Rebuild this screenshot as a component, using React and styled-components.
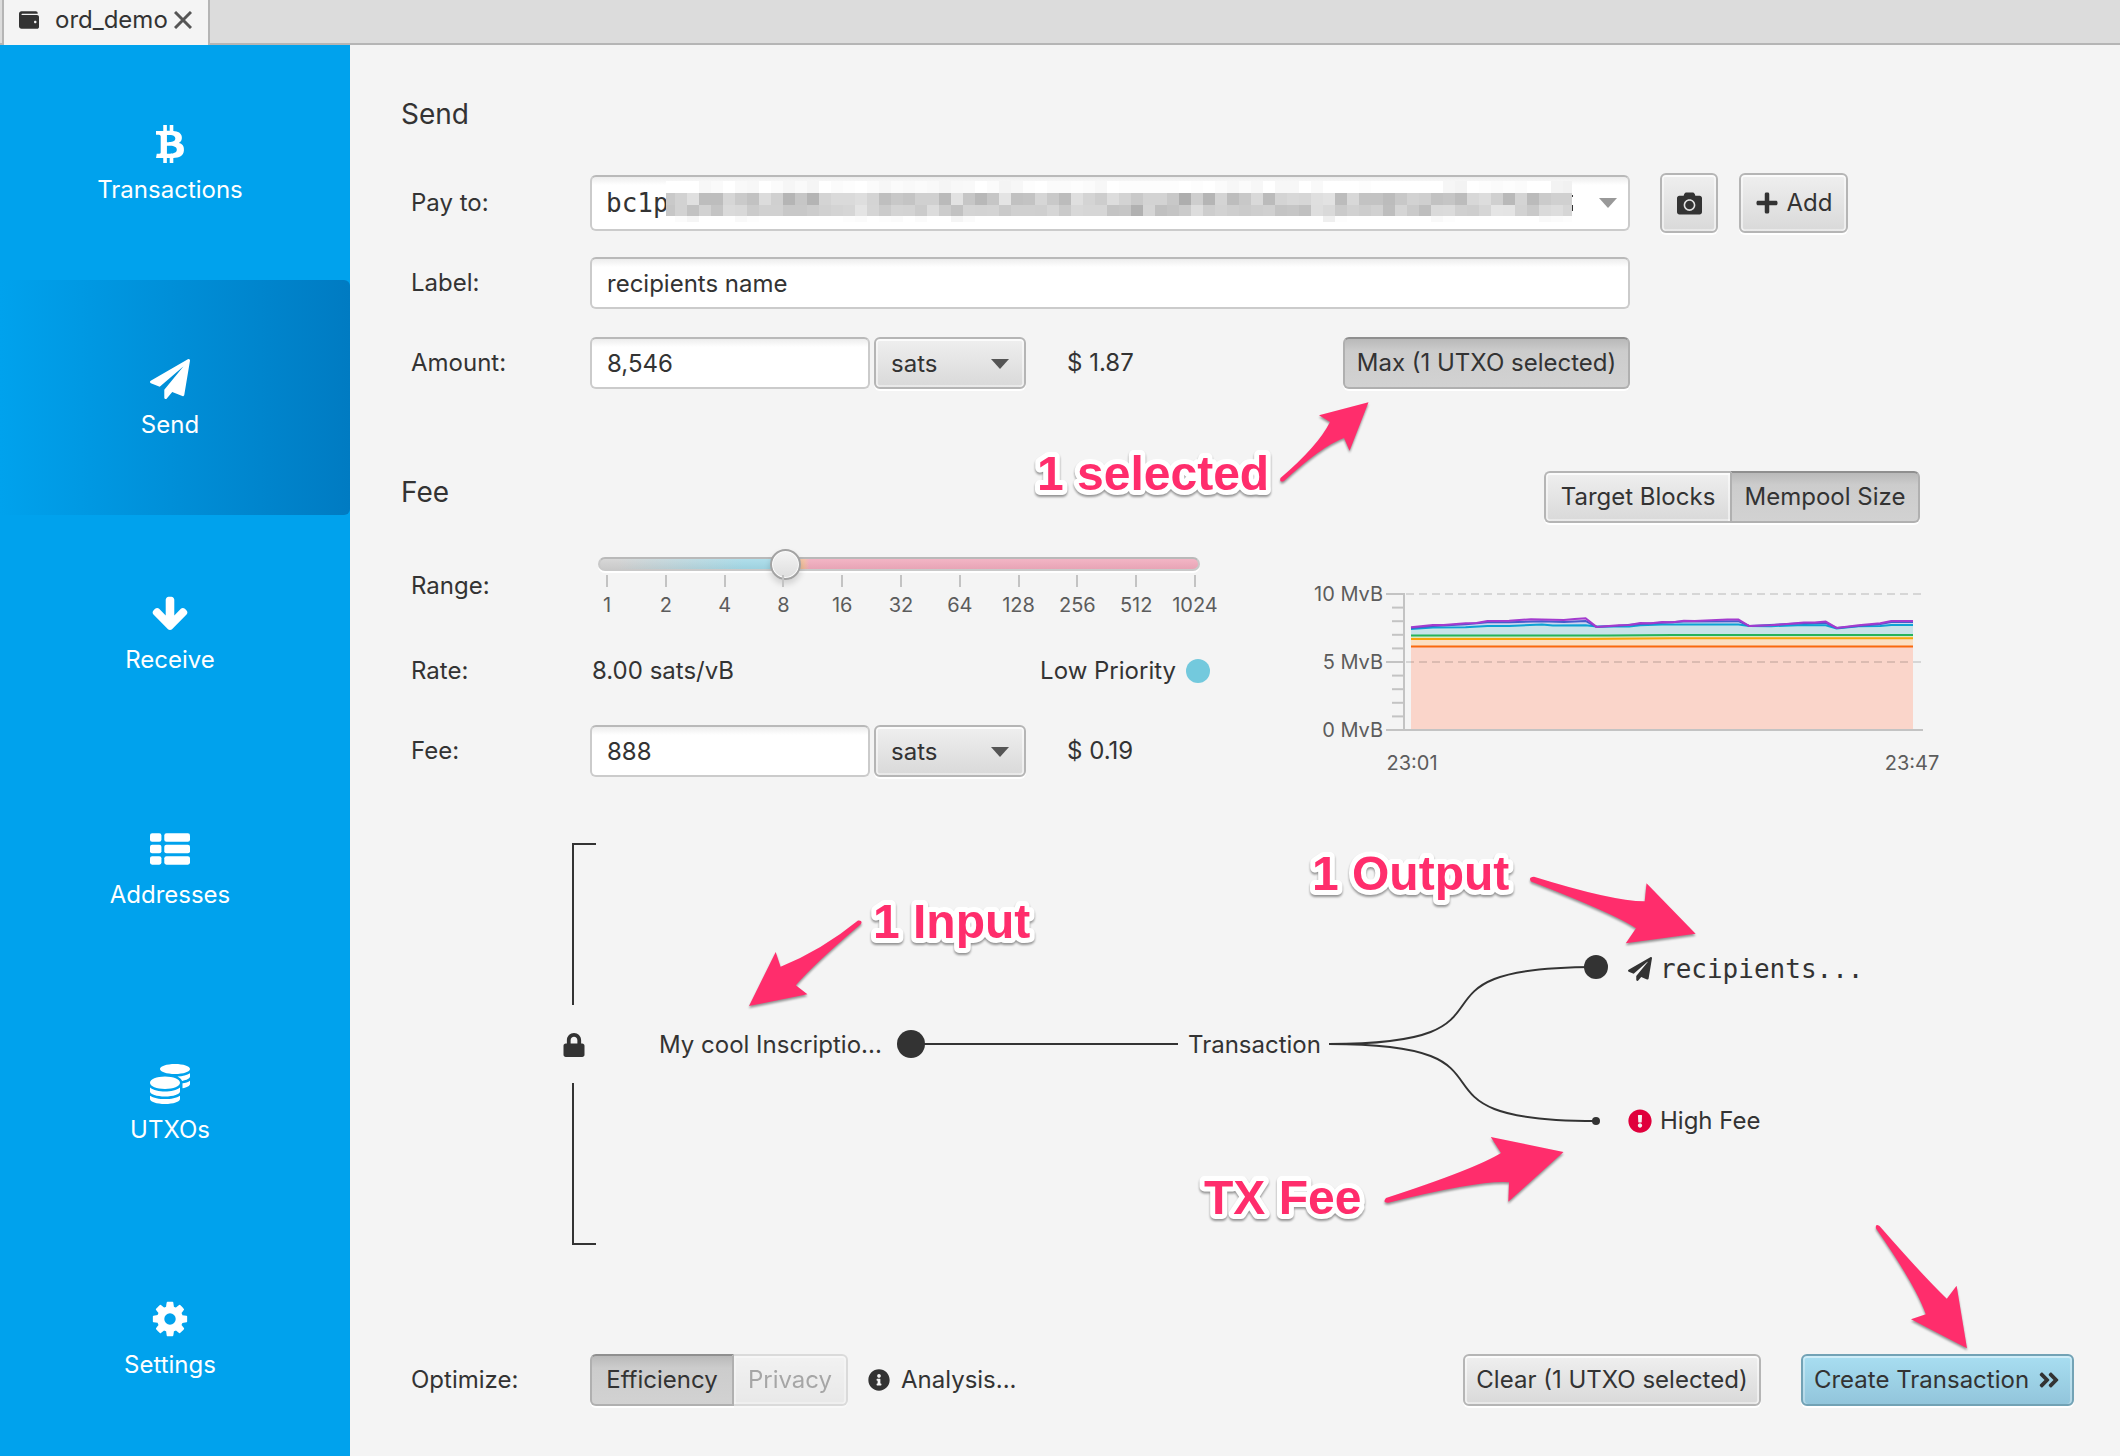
import React, { useState } from "react";
import styled, { createGlobalStyle, css } from "styled-components";
import {
  FaBtc,
  FaCoins,
  FaCamera,
  FaPlus,
  FaLock,
  FaPaperPlane,
  FaExclamationCircle,
  FaInfoCircle,
  FaWallet,
  FaAngleDoubleRight,
} from "react-icons/fa";

const Global = createGlobalStyle`
  *, *::before, *::after { box-sizing: border-box; }
  body { margin: 0; background: #f4f4f4; }
  body, button, input, select { font-family: Inter, "Liberation Sans", sans-serif; color: #333; }
`;

const INK = "#333333";
const PINK = "#ff2d6c";

/* ---------- shell ---------- */

const Window = styled.div`
  display: flex;
  flex-direction: column;
  min-height: 100vh;
  font-size: 24px;
  line-height: 32px;
  color: ${INK};
`;

const TabBar = styled.div`
  display: flex;
  height: 45px;
  padding-left: 2px;
  background: #dcdcdc;
  border-bottom: 2px solid #b5b5b5;
`;

const Tab = styled.div`
  display: flex;
  align-items: center;
  height: 45px;
  padding: 0 16px 6px 15px;
  background: #f4f4f4;
  border-left: 2px solid #b5b5b5;
  border-right: 2px solid #b5b5b5;
`;

const TabTitle = styled.span`
  margin: 0 6px 0 16px;
`;

const CloseButton = styled.button`
  display: flex;
  padding: 0;
  border: 0;
  background: none;
  color: #555;
`;

const Body = styled.div`
  display: flex;
  flex: 1;
`;

const Sidebar = styled.nav`
  display: flex;
  flex-direction: column;
  flex: 0 0 350px;
  background: #00a2ed;
`;

const NavItem = styled.button`
  display: flex;
  flex: 1;
  flex-direction: column;
  align-items: center;
  justify-content: center;
  gap: 10px;
  padding: 4px 10px 0 0;
  border: 0;
  border-radius: 0 6px 6px 0;
  font-size: 24px;
  line-height: 32px;
  color: #fff;
  background: ${(p) => (p.$active ? "linear-gradient(to right, #00a2ed, #007bc2)" : "transparent")};
`;

const NavIcon = styled.span`
  display: flex;
  align-items: center;
  height: 40px;
`;

const Main = styled.main`
  display: flex;
  flex: 1;
  flex-direction: column;
  min-width: 0;
  padding: 47px 46px 50px 51px;
`;

/* ---------- form parts ---------- */

const Heading = styled.h2`
  margin: 0 0 27px;
  font-size: 28px;
  font-weight: 400;
  line-height: 44px;
`;

const Row = styled.div`
  display: grid;
  grid-template-columns: 179px minmax(0, 1fr);
  align-items: center;
  min-height: ${(p) => (p.$tall ? 90 : 80)}px;
  padding-left: 10px;
`;

const SendSection = styled.section`
  max-width: 1447px;
`;

const SendRow = styled(Row)`
  grid-template-columns: 179px minmax(0, 1fr) 218px;
`;

const RowButtons = styled.div`
  display: flex;
  gap: 21px;
  padding-left: 30px;
`;

const Inline = styled.div`
  display: flex;
  align-items: center;
`;

const fieldBox = css`
  height: 52px;
  border: 2px solid #cbcbcb;
  border-top-color: #b9b9b9;
  border-radius: 6px;
  background: linear-gradient(#ededed, #ffffff 8px);
  font-size: 24px;
  color: ${INK};
  outline: none;
`;

const TextInput = styled.input`
  ${fieldBox}
  width: ${(p) => (p.$short ? "280px" : "100%")};
  padding: 0 15px;
`;

const Combo = styled.div`
  position: relative;
`;

const AddressInput = styled.input`
  ${fieldBox}
  display: block;
  width: 100%;
  height: 56px;
  padding: 0 14px;
  font-family: "DejaVu Sans Mono", monospace;
  font-size: 26px;
`;

const Redaction = styled.svg`
  position: absolute;
  left: 76px;
  top: 6px;
`;

const ComboArrow = styled.svg`
  position: absolute;
  right: 13px;
  top: 23px;
`;

const raised = css`
  border: 2px solid #b5b5b5;
  background: linear-gradient(#efefef, #d9d9d9);
  box-shadow: inset 0 2px 0 #fbfbfb, inset 2px 0 0 rgba(255, 255, 255, 0.5),
    inset -2px 0 0 rgba(255, 255, 255, 0.5), inset 0 -2px 0 rgba(255, 255, 255, 0.4), 0 2px 0 #fff;
`;

const pressed = css`
  border: 2px solid #b0b0b0;
  border-top-color: #8f8f8f;
  background: linear-gradient(#b9b9b9, #cccccc 12px, #d2d2d2);
  box-shadow: 0 2px 0 #fff;
`;

const primary = css`
  border: 2px solid #72a2b5;
  background: linear-gradient(#a8def1, #92c5db);
  box-shadow: inset 0 2px 0 #cfedf8, inset 2px 0 0 rgba(255, 255, 255, 0.3),
    inset -2px 0 0 rgba(255, 255, 255, 0.3), 0 2px 0 #fff;
`;

const Button = styled.button`
  display: flex;
  align-items: center;
  justify-content: center;
  gap: 8px;
  width: ${(p) => p.$width}px;
  height: ${(p) => (p.$tall ? 60 : 52)}px;
  padding: 0;
  border-radius: 6px;
  font-size: 24px;
  line-height: 32px;
  color: ${INK};
  white-space: nowrap;
  ${(p) => (p.$pressed ? pressed : p.$primary ? primary : raised)}
`;

const Segments = styled.div`
  display: flex;
`;

const Segment = styled(Button)`
  border-radius: ${(p) => (p.$first ? "6px 0 0 6px" : "0 6px 6px 0")};
  ${(p) => (p.$first ? (p.$pressed ? "" : "border-right: 0;") : p.$pressed ? "" : "border-left: 0;")}
  opacity: ${(p) => (p.disabled ? 0.4 : 1)};
`;

const SelectWrap = styled.div`
  position: relative;
  width: 152px;
  margin: 0 41px 0 4px;
`;

const Select = styled.select`
  ${raised}
  appearance: none;
  width: 100%;
  height: 52px;
  padding: 0 15px;
  border-radius: 6px;
  font-size: 24px;
  outline: none;
`;

const SelectArrow = styled.svg`
  position: absolute;
  right: 17px;
  top: 22px;
  pointer-events: none;
`;

const Anchor = styled.div`
  position: relative;
  margin-left: ${(p) => (p.$push ? "auto" : "0")};
`;

/* ---------- fee section ---------- */

const FeeSection = styled.section`
  display: flex;
  gap: 85px;
  margin-top: 67px;
`;

const FeeForm = styled.div`
  flex: 0 0 814px;
`;

const FeeChart = styled.div`
  display: flex;
  flex: 0 0 650px;
  flex-direction: column;
  align-items: flex-end;
  gap: 48px;
  padding-top: 1px;
`;

const ChartModes = styled(Segments)`
  margin-right: 30px;
`;

const SliderBox = styled.div`
  padding: 0 15px 7px 8px;
`;

const Slider = styled.input`
  appearance: none;
  display: block;
  width: 100%;
  height: 30px;
  margin: 0;
  background: none;

  &::-webkit-slider-runnable-track {
    height: 14px;
    border: 2px solid #c9c9c9;
    border-top-color: #b9b9b9;
    border-radius: 7px;
    background: linear-gradient(rgba(255, 255, 255, 0.12), rgba(0, 0, 0, 0.04)),
      linear-gradient(to right, #d2d2d2, #d2d2d2 3%, #a5dae8 24%, #a5dae8 30%, #f5bf9d 32%, #f5bf9d 34%, #f1abbd 35%);
    box-shadow: 0 2px 0 #fff;
  }

  &::-webkit-slider-thumb {
    appearance: none;
    width: 31px;
    height: 31px;
    margin-top: -10px;
    border: 2px solid #a3a3a3;
    border-radius: 50%;
    background: linear-gradient(#f4f4f4, #dedede);
    box-shadow: inset 0 0 0 1px #fbfbfb, 0 4px 6px rgba(0, 0, 0, 0.15);
  }
`;

const Ticks = styled.div`
  display: flex;
  justify-content: space-between;
  margin: -4px 4px 0 8px;
`;

const Tick = styled.div`
  display: flex;
  flex-direction: column;
  align-items: center;
  gap: 6px;
  width: 2px;
  font-size: 20px;
  line-height: 24px;
  color: #5c5c5c;

  &::before {
    content: "";
    width: 2px;
    height: 12px;
    background: #c3c3c3;
  }
`;

const Rate = styled.div`
  display: flex;
  align-items: center;
  padding: 0 5px 0 2px;
`;

const Priority = styled.span`
  display: flex;
  align-items: center;
  gap: 10px;
  margin-left: auto;

  &::after {
    content: "";
    width: 24px;
    height: 24px;
    border-radius: 50%;
    background: #73c9dd;
  }
`;

/* ---------- diagram ---------- */

const Diagram = styled.section`
  position: relative;
  width: 1300px;
  height: 402px;
  margin: 52px 0 0 162px;
`;

const DiagramLines = styled.svg`
  position: absolute;
  inset: 0;
`;

const Node = styled.div`
  position: absolute;
  left: ${(p) => p.$x}px;
  top: ${(p) => p.$y}px;
  display: flex;
  align-items: center;
  gap: 8px;
  height: 32px;
  white-space: nowrap;
  font-family: ${(p) => (p.$mono ? '"DejaVu Sans Mono", monospace' : "inherit")};
  font-size: ${(p) => (p.$mono ? 26 : 24)}px;
`;

/* ---------- footer ---------- */

const Footer = styled.footer`
  display: flex;
  align-items: center;
  margin-top: auto;
  padding-left: 10px;
`;

const FooterLabel = styled.span`
  width: 179px;
`;

const AnalysisButton = styled.button`
  display: flex;
  align-items: center;
  gap: 11px;
  margin: 0 auto 0 20px;
  padding: 0;
  border: 0;
  background: none;
  font-size: 24px;
  line-height: 32px;
  color: ${INK};
`;

const FooterActions = styled.div`
  display: flex;
  gap: 40px;
`;

/* ---------- call-outs ---------- */

const CalloutLayer = styled.svg`
  position: absolute;
  left: ${(p) => p.$left}px;
  top: ${(p) => p.$top}px;
  overflow: visible;
  pointer-events: none;

  path {
    fill: ${PINK};
    filter: drop-shadow(0 2px 1px rgba(0, 0, 0, 0.4));
  }

  text {
    font-family: "Liberation Sans", Arial, sans-serif;
    font-size: 48px;
    font-weight: 700;
    fill: ${PINK};
    stroke: #fff;
    stroke-width: 10px;
    stroke-linejoin: round;
    paint-order: stroke;
    filter: drop-shadow(0 2px 1px rgba(0, 0, 0, 0.4));
  }
`;

/* ---------- icons ---------- */

const Glyph = ({ d }) => (
  <svg width="40" height="40" viewBox="0 0 1792 1792" fill="currentColor" aria-hidden="true">
    <path d={d} />
  </svg>
);

const PLANE =
  "M1764 11q33 24 27 64l-256 1536q-5 29-32 45-14 8-31 8-11 0-24-5l-453-185-242 295q-18 23-49 23-13 0-22-4-19-7-30.500-23.500t-11.500-36.500v-349l864-1059-1069 925-395-162q-37-14-40-55-2-40 32-59l1664-960q15-9 32-9 20 0 36 11z";
const ARROW =
  "M1675 832q0 53-37 90l-651 652q-39 37-91 37-53 0-90-37l-651-652q-38-36-38-90 0-53 38-91l74-75q39-37 91-37 53 0 90 37l294 294v-704q0-52 38-90t90-38h128q52 0 90 38t38 90v704l294-294q37-37 90-37 52 0 91 37l75 75q37 39 37 91z";
const COG =
  "M1152 896q0-106-75-181t-181-75-181 75-75 181 75 181 181 75 181-75 75-181zm512-109v222q0 12-8 23t-20 13l-185 28q-19 54-39 91 35 50 107 138 10 12 10 25t-9 23q-27 37-99 108t-94 71q-12 0-26-9l-138-108q-44 23-91 38-16 136-29 186-7 28-36 28h-222q-14 0-24.500-8.500t-11.500-21.500l-28-184q-49-16-90-37l-141 107q-10 9-25 9-14 0-25-11-126-114-165-168-7-10-7-23 0-12 8-23 15-21 51-66.500t54-70.500q-27-50-41-99l-183-27q-13-2-21-12.500t-8-23.500v-222q0-12 8-23t19-13l186-28q14-46 39-92-40-57-107-138-10-12-10-24 0-10 9-23 26-36 98.500-107.500t94.500-71.500q13 0 26 10l138 107q44-23 91-38 16-136 29-186 7-28 36-28h222q14 0 24.500 8.500t11.500 21.500l28 184q49 16 90 37l142-107q9-9 24-9 13 0 25 10 129 119 165 170 7 8 7 22 0 12-8 23-15 21-51 66.500t-54 70.500q26 50 41 98l183 28q13 2 21 12.500t8 23.500z";

const ListGlyph = () => (
  <svg width="40" height="40" viewBox="0 0 1792 1792" fill="currentColor" aria-hidden="true">
    {[192, 704, 1216].map((y) => (
      <g key={y}>
        <rect x="0" y={y} width="512" height="384" rx="96" />
        <rect x="640" y={y} width="1152" height="384" rx="96" />
      </g>
    ))}
  </svg>
);

const NAV = [
  ["Transactions", <FaBtc size={38} />],
  ["Send", <Glyph d={PLANE} />],
  ["Receive", <Glyph d={ARROW} />],
  ["Addresses", <ListGlyph />],
  ["UTXOs", <FaCoins size={40} />],
  ["Settings", <Glyph d={COG} />],
];

/* ---------- redacted address ---------- */

const CELLS = [
  "fffffff7fafff9f7fffbf6faf5fffbfdfffbf7fbf9fbf9f5f8f9fffbf4f7fdfffbfbfdfbf7fffdfdfdfdfdfffdfffbf7fbf7fff7f7fff9fffffffdffffffffffff f6f3fffdfbfdfbfffff3f1fff9fbf9f9",
  "c9d2e0bdbdd6cac2dcd0b5c6b4d4dadaded4bfc8c4d0d0bae2c6b8c6e4c1c3d6c9bcdfd4cdddd3c9d3d3c8aeceb5d4bdc8d9bbd4d8d6dfe2bcd8c3c3bcc8d2cfc2c5bcd8ddd0b9d4bbcbd0d0",
  "c6d2c2d2c4dad8cbd1d1c8c8ccd1d4d6e4d5cbd4d3cbdcccc2d4d3d4cad0d0cfd6cad8d6d6c4c6b1d5c0c4cbddcdd2cecbced0c4c6c0ded9cad1cdd1bed5cabedadbd0ced6e5e4d2c9daddd6",
  "fffbf5fffffff9fdfffffffffffffffdfbfffdfbfffbfffff5fbffffffffffffffffffffffffffffffffffffffffffffffffffffffffffeffdffffffffffffff f9fdfffffffffffffff9fbfdff",
].map((row) => row.replace(/ /g, "").match(/../g));
const CELL_TOP = [0, 12, 24, 35];
const CELL_HEIGHT = [12, 12, 11, 6];

const RedactedAddress = () => (
  <Redaction width="908" height="42" shapeRendering="crispEdges" aria-hidden="true">
    {CELLS.map((row, r) =>
      row.slice(0, 76).map((c, i) => (
        <rect
          key={`${r}-${i}`}
          x={i === 0 ? 0 : i * 12 - 3}
          y={CELL_TOP[r]}
          width={i === 0 ? 9 : i === 75 ? 9 : 12}
          height={CELL_HEIGHT[r]}
          fill={`#${c}${c}${c}`}
        />
      ))
    )}
    <path d="M906 14h1v2h-1zM906 24h1v6h-1z" fill={INK} />
  </Redaction>
);

/* ---------- mempool chart ---------- */

const SERIES = {
  orange: [[0, 6.14], [46, 6.15]],
  yellow: [[0, 6.69], [16, 6.69], [24, 6.74], [46, 6.74]],
  green: [[0, 6.94], [18, 6.94], [24, 6.98], [46, 6.98]],
  blue: [[0, 7.43], [2, 7.53], [5, 7.56], [7, 7.65], [9, 7.65], [12, 7.75], [13, 7.68], [16, 7.7], [17, 7.6], [20, 7.6], [21, 7.7], [23, 7.75], [30, 7.75], [31, 7.65], [33, 7.63], [36, 7.73], [38, 7.7], [39, 7.46], [41, 7.63], [43, 7.65], [44, 7.73], [46, 7.73]],
  indigo: [[0, 7.5], [2, 7.65], [5, 7.78], [7, 7.92], [9, 7.92], [12, 8], [14, 7.95], [16, 8.02], [17, 7.58], [19, 7.66], [21, 7.8], [25, 7.97], [30, 8], [31, 7.65], [36, 7.85], [38, 7.88], [39, 7.5], [43, 7.8], [44, 7.95], [46, 7.95]],
  purple: [[0, 7.55], [2, 7.73], [3, 7.73], [5, 7.85], [6, 7.87], [7, 8.02], [9, 8.04], [11, 8.14], [14, 8.09], [15, 8.17], [16, 8.22], [17, 7.58], [19, 7.7], [20, 7.73], [21, 7.87], [22, 7.85], [23, 7.95], [24, 7.92], [25, 8.04], [26, 8.02], [29, 8.12], [30, 8.12], [31, 7.65], [33, 7.7], [36, 7.9], [37, 7.9], [38, 7.97], [39, 7.51], [41, 7.7], [43, 7.85], [44, 8.02], [46, 8.02]],
};

const px = (m) => 111 + (m * 502) / 46;
const py = (v) => 159 - v * 13.6;
const line = (s) => s.map(([m, v]) => `${px(m).toFixed(1)},${py(v).toFixed(1)}`).join(" ");
const BASE = [[0, 0], [46, 0]];
const band = (upper, lower) => `${line(upper)} ${line([...lower].reverse())}`;

const AREAS = [
  ["#fad5ca", SERIES.orange, BASE],
  ["#fbe0c3", SERIES.yellow, SERIES.orange],
  ["#dfe8bd", SERIES.green, SERIES.yellow],
  ["#c9e3e9", SERIES.blue, SERIES.green],
  ["#cdd6f0", SERIES.indigo, SERIES.blue],
  ["#e3cdf0", SERIES.purple, SERIES.indigo],
];
const LINES = [
  ["#f9690e", SERIES.orange],
  ["#f7a50c", SERIES.yellow],
  ["#27b45c", SERIES.green],
  ["#0da2d4", SERIES.blue],
  ["#4a5bcb", SERIES.indigo],
  ["#a43bce", SERIES.purple],
];

const AxisText = styled.text`
  font-size: 20px;
  fill: #5c5c5c;
`;

const MempoolChart = () => (
  <svg width="650" height="220" role="img" aria-label="Mempool size">
    {AREAS.map(([fill, upper, lower]) => (
      <polygon key={fill} points={band(upper, lower)} fill={fill} />
    ))}
    {[23, 91].map((y) => (
      <line key={y} x1="106" x2="623" y1={y} y2={y} stroke="#000" strokeOpacity="0.12" strokeWidth="2" strokeDasharray="8 5" />
    ))}
    {LINES.map(([stroke, s]) => (
      <polyline key={stroke} points={line(s)} fill="none" stroke={stroke} strokeWidth="2" />
    ))}
    <g stroke="#c3c3c3" strokeWidth="2">
      <path d="M104 22V159M86 159H623M86 23H104M86 91H104" />
      {[1, 2, 3, 4, 6, 7, 8, 9].map((v) => (
        <line key={v} x1="92" x2="103" y1={py(v)} y2={py(v)} />
      ))}
    </g>
    <AxisText x="83" y="30" textAnchor="end">10 MvB</AxisText>
    <AxisText x="83" y="98" textAnchor="end">5 MvB</AxisText>
    <AxisText x="83" y="166" textAnchor="end">0 MvB</AxisText>
    <AxisText x="112" y="199" textAnchor="middle">23:01</AxisText>
    <AxisText x="612" y="199" textAnchor="middle">23:47</AxisText>
  </svg>
);

const UnitSelect = ({ label }) => (
  <SelectWrap>
    <Select aria-label={label} defaultValue="sats">
      <option>sats</option>
      <option>BTC</option>
    </Select>
    <SelectArrow width="18" height="10" aria-hidden="true">
      <path d="M0 0H18L9 10Z" fill="#555" />
    </SelectArrow>
  </SelectWrap>
);

const RATES = [1, 2, 4, 8, 16, 32, 64, 128, 256, 512, 1024];

export default function App() {
  const [range, setRange] = useState(3);
  return (
    <Window>
      <Global />
      <TabBar>
        <Tab>
          <FaWallet size={20} />
          <TabTitle>ord_demo</TabTitle>
          <CloseButton aria-label="Close tab">
            <svg width="18" height="18" fill="none" stroke="currentColor" strokeWidth="3">
              <path d="M1 1L17 17M17 1L1 17" />
            </svg>
          </CloseButton>
        </Tab>
      </TabBar>
      <Body>
        <Sidebar>
          {NAV.map(([name, icon]) => (
            <NavItem key={name} $active={name === "Send"}>
              <NavIcon>{icon}</NavIcon>
              {name}
            </NavItem>
          ))}
        </Sidebar>
        <Main>
          <SendSection>
            <Heading>Send</Heading>
            <SendRow>
              <label htmlFor="payto">Pay to:</label>
              <Combo>
                <AddressInput id="payto" defaultValue="bc1p" />
                <RedactedAddress />
                <ComboArrow width="18" height="10" aria-hidden="true">
                  <path d="M0 0H18L9 10Z" fill="#999" />
                </ComboArrow>
              </Combo>
              <RowButtons>
                <Button $tall $width={58} aria-label="Scan QR code">
                  <FaCamera size={25} />
                </Button>
                <Button $tall $width={109}>
                  <FaPlus size={24} />
                  Add
                </Button>
              </RowButtons>
            </SendRow>
            <SendRow>
              <label htmlFor="label">Label:</label>
              <TextInput id="label" defaultValue="recipients name" />
            </SendRow>
            <SendRow>
              <label htmlFor="amount">Amount:</label>
              <Inline>
                <TextInput id="amount" $short defaultValue="8,546" />
                <UnitSelect label="Amount unit" />
                <span>$ 1.87</span>
                <Anchor $push>
                  <Button $pressed $width={287}>Max (1 UTXO selected)</Button>
                  <CalloutLayer $left={-315} $top={55} width="350" height="120" viewBox="1028 392 350 120">
                    <text x="1037" y="490">1 selected</text>
                    <path d="M1368.500 402.300L1319 415.300L1330 422Q1318 446 1280.500 478Q1279 483 1284 481Q1322 446 1344 438L1349.600 450.700Z" />
                  </CalloutLayer>
                </Anchor>
              </Inline>
            </SendRow>
          </SendSection>

          <FeeSection>
            <FeeForm>
              <Heading>Fee</Heading>
              <Row $tall>
                <label htmlFor="range">Range:</label>
                <SliderBox>
                  <Slider id="range" type="range" min="0" max="10" value={range} onChange={(e) => setRange(Number(e.target.value))} />
                  <Ticks>
                    {RATES.map((r) => (
                      <Tick key={r}>{r}</Tick>
                    ))}
                  </Ticks>
                </SliderBox>
              </Row>
              <Row>
                <span>Rate:</span>
                <Rate>
                  <span>8.00 sats/vB</span>
                  <Priority>Low Priority</Priority>
                </Rate>
              </Row>
              <Row>
                <label htmlFor="fee">Fee:</label>
                <Inline>
                  <TextInput id="fee" $short defaultValue="888" />
                  <UnitSelect label="Fee unit" />
                  <span>$ 0.19</span>
                </Inline>
              </Row>
            </FeeForm>
            <FeeChart>
              <ChartModes>
                <Segment $first $width={186}>Target Blocks</Segment>
                <Segment $pressed $width={190}>Mempool Size</Segment>
              </ChartModes>
              <MempoolChart />
            </FeeChart>
          </FeeSection>

          <Diagram>
            <DiagramLines width="1300" height="402" viewBox="563 843 1300 402" fill="none" stroke={INK} strokeWidth="2" aria-hidden="true">
              <path d="M596 844H573V1005M573 1083V1244H596" />
              <path d="M911 1044H1178" />
              <path d="M1329 1044C1542 1044 1383 967 1596 967" />
              <path d="M1329 1044C1542 1044 1383 1121 1596 1121" />
              <g fill={INK} stroke="none">
                <circle cx="911" cy="1044" r="14" />
                <circle cx="1596" cy="967" r="12" />
                <circle cx="1596" cy="1121" r="4" />
              </g>
            </DiagramLines>
            <Node $x={-1} $y={186}>
              <FaLock size={24} />
            </Node>
            <Node $x={96} $y={186}>My cool Inscriptio...</Node>
            <Node $x={625} $y={186}>Transaction</Node>
            <Node $x={1065} $y={110} $mono>
              <FaPaperPlane size={24} />
              recipients...
            </Node>
            <Node $x={1065} $y={262}>
              <FaExclamationCircle size={24} color="#e0003c" />
              High Fee
            </Node>
            <CalloutLayer $left={0} $top={0} width="1300" height="402" viewBox="563 843 1300 402">
              <text x="873" y="938">1 Input</text>
              <path d="M749 1006L775.700 952L780.600 966.700Q822 950 858 920.500Q863 920 861 924Q814 964 795.800 985.300L807.400 994.300Z" />
              <text x="1312" y="890">1 Output</text>
              <path d="M1695.600 933.700L1646.500 883.300L1644.700 901.300Q1612 901 1534 876.700Q1528 877 1531 881.500Q1615 914 1636 928.300L1625.800 943.300Z" />
              <text x="1204" y="1214">TX Fee</text>
              <path d="M1563.500 1152L1490.800 1137L1501 1153Q1475 1169 1386 1198Q1382 1203 1388.400 1202.700Q1480 1180 1509 1182.300L1508.300 1201.700Z" />
            </CalloutLayer>
          </Diagram>

          <Footer>
            <FooterLabel>Optimize:</FooterLabel>
            <Segments>
              <Segment $first $pressed $width={144}>Efficiency</Segment>
              <Segment disabled $width={114}>Privacy</Segment>
            </Segments>
            <AnalysisButton>
              <FaInfoCircle size={22} />
              Analysis...
            </AnalysisButton>
            <FooterActions>
              <Button $width={298}>Clear (1 UTXO selected)</Button>
              <Anchor>
                <Button $primary $width={273}>
                  Create Transaction
                  <FaAngleDoubleRight size={24} />
                </Button>
                <CalloutLayer $left={66} $top={-138} width="110" height="140" viewBox="1867 1216 110 140">
                  <path d="M1967 1348.300L1956.600 1285.700L1946.800 1298.700Q1925 1278 1879.500 1226Q1875 1223 1876 1228.500Q1916 1286 1925.800 1314.300L1911 1319.300Z" />
                </CalloutLayer>
              </Anchor>
            </FooterActions>
          </Footer>
        </Main>
      </Body>
    </Window>
  );
}
